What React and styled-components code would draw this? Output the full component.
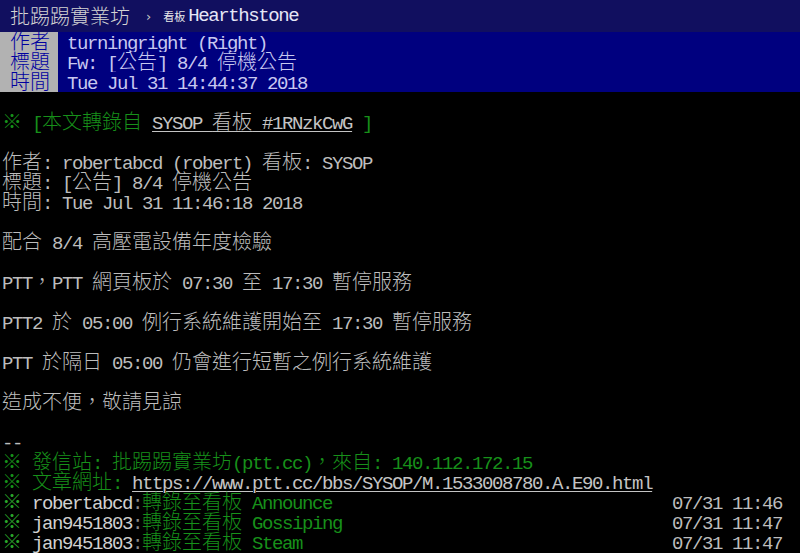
import React from "react";
import styled, { createGlobalStyle, css } from "styled-components";

const GlobalStyle = createGlobalStyle`
  html, body { margin: 0; padding: 0; background: #000; }
  body { overflow: hidden; }
`;

const Page = styled.div`
  width: 800px;
  height: 553px;
  background: #000;
  overflow: hidden;
  color: #bdbdbd;
  font-family: "Liberation Mono", monospace;
  font-size: 19px;
`;

const TopBar = styled.div`
  height: 32px;
  background: #110f5f;
  display: flex;
  align-items: center;
  padding-left: 10px;
  white-space: pre;
`;

const Brand = styled.span`
  font-family: "Noto Sans CJK TC", sans-serif;
  font-weight: 300;
  font-size: 20px;
  color: #d4d4d4;
  line-height: 32px;
`;

const Crumb = styled.span`
  font-family: "DejaVu Sans", sans-serif;
  font-size: 13px;
  color: #c8c8c8;
  margin-left: 16px;
`;

const BoardTag = styled.span`
  font-family: "Noto Sans CJK TC", sans-serif;
  font-size: 11px;
  color: #e8e8e8;
  margin-left: 12px;
`;

const BoardName = styled.span`
  font-family: "Liberation Mono", monospace;
  font-size: 19px;
  letter-spacing: -1.4px;
  color: #e6e6f6;
  margin-left: 3px;
`;

const Meta = styled.div`
  display: grid;
  grid-template-columns: 58px 1fr;
  grid-auto-rows: 20px;
`;

const MetaTag = styled.div`
  background: #b2b2b2;
  color: #0000a0;
  padding-left: 10px;
  line-height: 20px;
  white-space: pre;
`;

const MetaValue = styled.div`
  background: #00007f;
  color: #c8c8f0;
  padding-left: 9px;
  line-height: 20px;
  white-space: pre;
`;

const Body = styled.div`
  padding: 0 0 0 2px;
`;

const Line = styled.div`
  height: 20px;
  line-height: 20px;
  white-space: pre;
`;

const TransferLine = styled.div`
  display: grid;
  grid-template-columns: 670px auto;
  height: 20px;
  line-height: 20px;
  white-space: pre;
`;

const segment = css`
  display: inline-block;
  vertical-align: top;
  height: 20px;
  text-decoration: ${(p) => (p.$u ? "underline" : "none")};
  text-decoration-thickness: 1px;
  text-underline-offset: 2px;
`;

const Narrow = styled.span`
  ${segment};
  font-family: "Liberation Mono", monospace;
  font-size: 19px;
  line-height: 25px;
  letter-spacing: -1.4px;
`;

const Wide = styled.span`
  ${segment};
  font-family: "Noto Sans CJK TC", "Noto Sans CJK SC", sans-serif;
  font-weight: 300;
  font-size: 20px;
  line-height: 18px;
  letter-spacing: 0;
`;

const Green = styled.span`
  color: ${(p) => (p.$bright ? "#2aa52a" : "#17901a")};
`;

const Link = styled.span`
  color: #c4c4c4;
`;

const User = styled.span`
  color: #d0d0d0;
`;

const Colon = styled.span`
  color: #8a8a8a;
`;

function T({ children, u }) {
  const parts = String(children).split(/([^\x00-\x7F]+)/);
  return parts.map((p, i) =>
    p === "" ? null : /[^\x00-\x7F]/.test(p) ? (
      <Wide key={i} $u={u}>{p}</Wide>
    ) : (
      <Narrow key={i} $u={u}>{p}</Narrow>
    )
  );
}

const transfers = [
  { user: "robertabcd", board: "Announce", time: "07/31 11:46" },
  { user: "jan9451803", board: "Gossiping", time: "07/31 11:47" },
  { user: "jan9451803", board: "Steam", time: "07/31 11:47" },
];

export default function App() {
  return (
    <Page>
      <GlobalStyle />
      <TopBar>
        <Brand>批踢踢實業坊</Brand>
        <Crumb>›</Crumb>
        <BoardTag>看板</BoardTag>
        <BoardName>Hearthstone</BoardName>
      </TopBar>
      <Meta>
        <MetaTag><T>作者</T></MetaTag>
        <MetaValue><T>turningright (Right)</T></MetaValue>
        <MetaTag><T>標題</T></MetaTag>
        <MetaValue><T>Fw: [公告] 8/4 停機公告</T></MetaValue>
        <MetaTag><T>時間</T></MetaTag>
        <MetaValue><T>Tue Jul 31 14:44:37 2018</T></MetaValue>
      </Meta>
      <Body>
        <Line> </Line>
        <Line>
          <Green><T>※ [本文轉錄自 </T></Green>
          <Link><T u>SYSOP 看板 #1RNzkCwG</T></Link>
          <Green><T> ]</T></Green>
        </Line>
        <Line> </Line>
        <Line><T>作者: robertabcd (robert) 看板: SYSOP</T></Line>
        <Line><T>標題: [公告] 8/4 停機公告</T></Line>
        <Line><T>時間: Tue Jul 31 11:46:18 2018</T></Line>
        <Line> </Line>
        <Line><T>配合 8/4 高壓電設備年度檢驗</T></Line>
        <Line> </Line>
        <Line><T>PTT，PTT 網頁板於 07:30 至 17:30 暫停服務</T></Line>
        <Line> </Line>
        <Line><T>PTT2 於 05:00 例行系統維護開始至 17:30 暫停服務</T></Line>
        <Line> </Line>
        <Line><T>PTT 於隔日 05:00 仍會進行短暫之例行系統維護</T></Line>
        <Line> </Line>
        <Line><T>造成不便，敬請見諒</T></Line>
        <Line> </Line>
        <Line><T>--</T></Line>
        <Line>
          <Green><T>※ 發信站: 批踢踢實業坊(ptt.cc)，來自: 140.112.172.15</T></Green>
        </Line>
        <Line>
          <Green><T>※ 文章網址: </T></Green>
          <Link><T u>https://www.ptt.cc/bbs/SYSOP/M.1533008780.A.E90.html</T></Link>
        </Line>
        {transfers.map((t, i) => (
          <TransferLine key={i}>
            <span>
              <Green $bright><T>※ </T></Green>
              <User><T>{t.user}</T></User>
              <Colon><T>:</T></Colon>
              <Green><T>{`轉錄至看板 ${t.board}`}</T></Green>
            </span>
            <span><T>{t.time}</T></span>
          </TransferLine>
        ))}
      </Body>
    </Page>
  );
}
